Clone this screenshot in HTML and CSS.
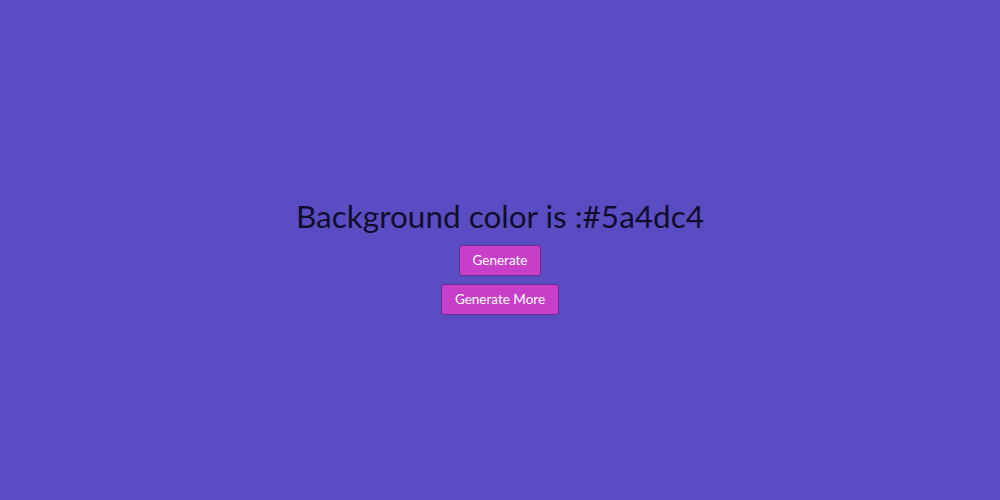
FILE: index.html
```html
<!DOCTYPE html>
<html>
<head>
<meta charset="utf-8">
<link rel="stylesheet" href="styles.css">
</head>
<body>
<main class="page">
  <h1 class="title">Background color is :#5a4dc4</h1>
  <button class="btn">Generate</button>
  <button class="btn">Generate More</button>
</main>
</body>
</html>
```

FILE: styles.css
```css
html, body {
  margin: 0;
  padding: 0;
  height: 100%;
}
body {
  background: #5a4dc4;
  font-family: Lato, "Open Sans", sans-serif;
}
.page {
  height: 100%;
  display: flex;
  flex-direction: column;
  align-items: center;
  justify-content: center;
  gap: 8px;
  padding-top: 12px;
  box-sizing: border-box;
}
.title {
  margin: 0 0 3px;
  font-size: 31.5px;
  font-weight: 400;
  color: #120d2a;
  line-height: 36px;
}
.btn {
  font-family: Lato, "Open Sans", sans-serif;
  font-size: 13.5px;
  color: #fff;
  background: #c73ec9;
  border: 1px solid #6e2a8e;
  border-radius: 3px;
  height: 31px;
  padding: 0 13px;
  cursor: pointer;
}
```
